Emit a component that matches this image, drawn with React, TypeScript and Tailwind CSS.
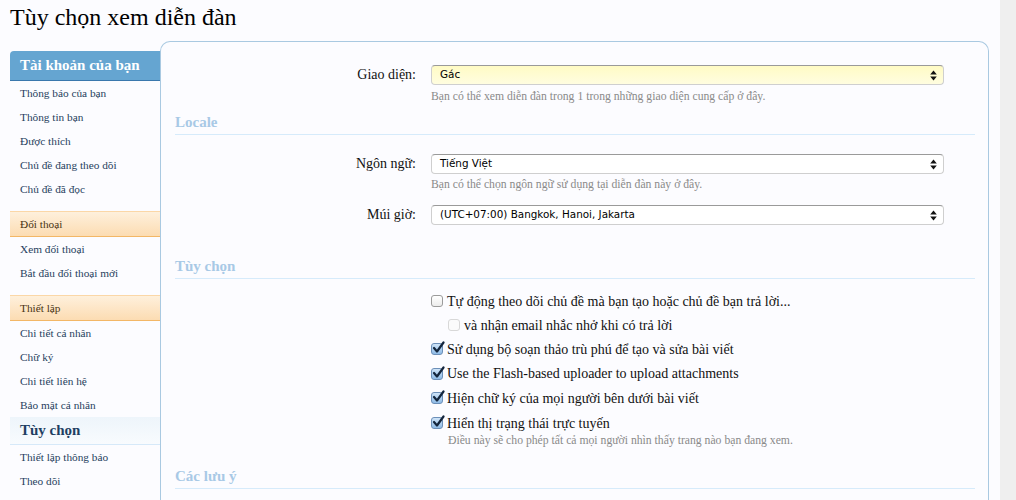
import React from 'react'

const serif = { fontFamily: '"Liberation Serif", "Times New Roman", serif' }
const sans = { fontFamily: '"DejaVu Sans", "Liberation Sans", sans-serif' }

type NavItem = { label: string; kind?: 'link' | 'section' | 'head' | 'active' }

const nav: NavItem[][] = [
  [
    { label: 'Tài khoản của bạn', kind: 'head' },
    { label: 'Thông báo của bạn' },
    { label: 'Thông tin bạn' },
    { label: 'Được thích' },
    { label: 'Chủ đề đang theo dõi' },
    { label: 'Chủ đề đã đọc' },
  ],
  [
    { label: 'Đối thoại', kind: 'section' },
    { label: 'Xem đối thoại' },
    { label: 'Bắt đầu đối thoại mới' },
  ],
  [
    { label: 'Thiết lập', kind: 'section' },
    { label: 'Chi tiết cá nhân' },
    { label: 'Chữ ký' },
    { label: 'Chi tiết liên hệ' },
    { label: 'Bảo mật cá nhân' },
    { label: 'Tùy chọn', kind: 'active' },
    { label: 'Thiết lập thông báo' },
    { label: 'Theo dõi' },
  ],
]

function Sidebar() {
  return (
    <div className="w-[150px] shrink-0 pt-[10px]" style={serif}>
      {nav.map((group, gi) => (
        <div key={gi} className={gi > 0 ? 'mt-[10px]' : ''}>
          {group.map((item) => {
            if (item.kind === 'head')
              return (
                <div
                  key={item.label}
                  className="h-[30px] rounded-tl-[4px] bg-[#65a5d1] border-b border-[#3a78ad] pl-[10px] flex items-center text-[15px] font-bold text-white"
                >
                  {item.label}
                </div>
              )
            if (item.kind === 'section')
              return (
                <div
                  key={item.label}
                  className="h-[26px] bg-gradient-to-b from-[#fef0dc] to-[#fcdcb2] border-t border-b border-t-[#fbd7a7] border-b-[#f3b766] pl-[10px] flex items-center text-[11.3px] text-[#4a3414]"
                >
                  {item.label}
                </div>
              )
            if (item.kind === 'active')
              return (
                <div
                  key={item.label}
                  className="h-[28px] bg-gradient-to-b from-[#eef5fb] to-[#f8fbfe] border-b border-[#d6e9f9] pl-[10px] flex items-center text-[15px] font-bold text-[#1f3f63]"
                >
                  {item.label}
                </div>
              )
            return (
              <div key={item.label} className="h-[24px] pl-[10px] flex items-center text-[11.3px] text-[#273f5e]">
                {item.label}
              </div>
            )
          })}
        </div>
      ))}
    </div>
  )
}

function Arrows() {
  return (
    <svg width="7" height="11" viewBox="0 0 7 11" className="shrink-0">
      <path d="M3.5 0.5 L6.8 4.5 L0.2 4.5 Z" fill="#111" />
      <path d="M3.5 10.5 L6.8 6.5 L0.2 6.5 Z" fill="#111" />
    </svg>
  )
}

function Select({ value, yellow = false }: { value: string; yellow?: boolean }) {
  return (
    <div
      className={`w-[513px] h-[20px] rounded-[4px] border border-[#cfcfcf] border-t-[#9a9a9a] flex items-center justify-between pl-[8px] pr-[6px] text-[10.4px] text-black ${
        yellow ? 'bg-gradient-to-b from-[#fffbc4] to-[#fffde0]' : 'bg-white'
      }`}
      style={sans}
    >
      <span>{value}</span>
      <Arrows />
    </div>
  )
}

function Row({ label, children }: { label: string; children: React.ReactNode }) {
  return (
    <div className="flex items-center">
      <div className="w-[255px] shrink-0 text-right text-[14px] leading-[20px] text-[#111]">{label}</div>
      <div className="pl-[15px]">{children}</div>
    </div>
  )
}

function Hint({ children, className = '' }: { children: React.ReactNode; className?: string }) {
  return <div className={`text-[11.7px] text-[#8a8a8a] ${className}`}>{children}</div>
}

function Heading({ title, className = '' }: { title: string; className?: string }) {
  return (
    <div
      className={`ml-[14px] mr-[13px] h-[20px] leading-[14px] border-b border-[#d6ebfb] text-[15px] font-bold text-[#a8c9e6] ${className}`}
    >
      {title}
    </div>
  )
}

function Box({ checked, disabled = false }: { checked: boolean; disabled?: boolean }) {
  return (
    <span
      className={`relative inline-block w-[12px] h-[12px] shrink-0 rounded-[3px] border ${
        disabled
          ? 'border-[#d8d8d8] bg-[#fbfbfb]'
          : checked
          ? 'border-[#6c8fb8] bg-gradient-to-b from-[#cfe4f8] to-[#8fbbe6]'
          : 'border-[#9b9b9b] bg-gradient-to-b from-[#ffffff] to-[#ececec]'
      }`}
    >
      {checked && (
        <svg width="13" height="13" viewBox="0 0 13 13" className="absolute left-[0px] top-[-3px]">
          <path d="M2 7 L5 10.5 L11.5 1.5" stroke="#14263d" strokeWidth="2.2" fill="none" strokeLinecap="round" strokeLinejoin="round" />
        </svg>
      )}
    </span>
  )
}

const checks = [
  { label: 'Tự động theo dõi chủ đề mà bạn tạo hoặc chủ đề bạn trả lời...', checked: false, h: 'h-[24px]' },
  { label: 'và nhận email nhắc nhở khi có trả lời', checked: false, sub: true, h: 'h-[24px]' },
  { label: 'Sử dụng bộ soạn thảo trù phú để tạo và sửa bài viết', checked: true, h: 'h-[24px]' },
  { label: 'Use the Flash-based uploader to upload attachments', checked: true, h: 'h-[25px]' },
  { label: 'Hiện chữ ký của mọi người bên dưới bài viết', checked: true, h: 'h-[24px]' },
  { label: 'Hiển thị trạng thái trực tuyến', checked: true, h: 'h-[26px]' },
]

function Panel() {
  return (
    <div
      className="flex-1 mr-[11px] rounded-t-[10px] border border-b-0 border-[#a9c9e1] bg-[#fcfcff] h-[460px] overflow-hidden"
      style={serif}
    >
      <div className="pt-[23px]">
        <Row label="Giao diện:">
          <Select value="Gác" yellow />
        </Row>
        <Hint className="pl-[270px] mt-[5px] leading-[14px]">
          Bạn có thể xem diễn đàn trong 1 trong những giao diện cung cấp ở đây.
        </Hint>
        <Heading title="Locale" className="mt-[11px]" />
        <div className="mt-[19px]">
          <Row label="Ngôn ngữ:">
            <Select value="Tiếng Việt" />
          </Row>
        </div>
        <Hint className="pl-[270px] mt-[4px] leading-[14px]">
          Bạn có thể chọn ngôn ngữ sử dụng tại diễn đàn này ở đây.
        </Hint>
        <div className="mt-[13px]">
          <Row label="Múi giờ:">
            <Select value="(UTC+07:00) Bangkok, Hanoi, Jakarta" />
          </Row>
        </div>
        <Heading title="Tùy chọn" className="mt-[34px]" />
        <div className="mt-[10px] pl-[270px]">
          {checks.map((c) => (
            <div
              key={c.label}
              className={`${c.h} flex items-center gap-[4px] text-[14px] text-[#111] ${c.sub ? 'pl-[17px]' : ''}`}
            >
              <Box checked={c.checked} disabled={c.sub} />
              <span>{c.label}</span>
            </div>
          ))}
          <Hint className="pl-[17px] mt-[-1px] leading-[12px]">
            Điều này sẽ cho phép tất cả mọi người nhìn thấy trang nào bạn đang xem.
          </Hint>
        </div>
        <Heading title="Các lưu ý" className="mt-[22px]" />
      </div>
    </div>
  )
}

export default function App() {
  return (
    <div className="flex h-[500px] w-[1016px] overflow-hidden">
      <div className="w-[1000px] bg-[#fcfcff] pl-[10px]">
        <div className="h-[41px] pt-[2px] text-[24px] leading-[30px] text-black" style={serif}>
          Tùy chọn xem diễn đàn
        </div>
        <div className="flex">
          <Sidebar />
          <Panel />
        </div>
      </div>
      <div className="w-[16px] bg-[#efefef]" />
    </div>
  )
}
